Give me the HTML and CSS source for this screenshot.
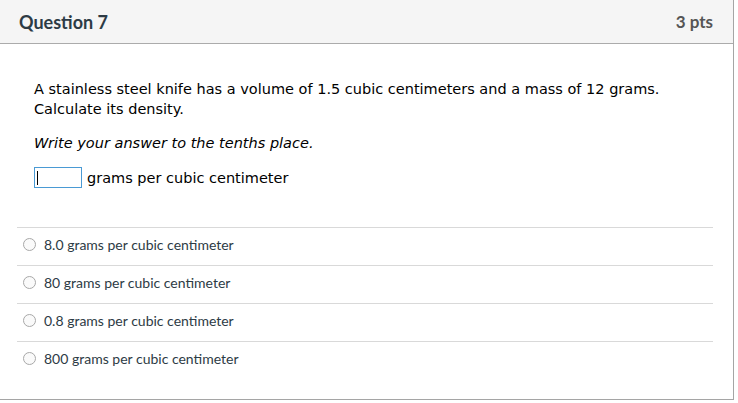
FILE: index.html
```html
<!DOCTYPE html>
<html>
<head>
<meta charset="utf-8">
<link rel="stylesheet" href="styles.css">
</head>
<body>
<div class="card">
  <div class="header">
    <span class="title">Question 7</span>
    <span class="pts">3 pts</span>
  </div>
  <div class="content">
    <p class="q">A stainless steel knife has a volume of 1.5 cubic centimeters and a mass of 12 grams. Calculate its density.</p>
    <p class="hint">Write your answer to the tenths place.</p>
    <div class="answer-row"><span class="input"><span class="caret"></span></span><span>grams per cubic centimeter</span></div>
  </div>
  <div class="options">
    <div class="opt"><span class="radio"></span><span>8.0 grams per cubic centimeter</span></div>
    <div class="opt"><span class="radio"></span><span>80 grams per cubic centimeter</span></div>
    <div class="opt"><span class="radio"></span><span>0.8 grams per cubic centimeter</span></div>
    <div class="opt"><span class="radio"></span><span>800 grams per cubic centimeter</span></div>
  </div>
</div>
</body>
</html>
```
FILE: styles.css
```css
html, body { margin: 0; padding: 0; background: #fff; }
.card {
  margin: -1px 0 0 -1px;
  width: 735px;
  height: 401px;
  border: 1px solid #a5a5a5;
  box-sizing: border-box;
  background: #fff;
}
.header {
  height: 44px;
  box-sizing: border-box;
  background: #f5f5f5;
  border-bottom: 1px solid #ababab;
  display: flex;
  justify-content: space-between;
  align-items: center;
  padding: 0 20px 0 19px;
  font-family: Lato, sans-serif;
  font-weight: bold;
  font-size: 18px;
}
.title { color: #2d3b45; }
.pts { color: #555; font-size: 17px; }
.content {
  padding: 35px 20px 0 34px;
  font-family: Verdana, "DejaVu Sans", sans-serif;
  font-size: 14.5px;
  color: #000;
  line-height: 20px;
}
.q { margin: 0 0 14px; width: 660px; }
.hint { margin: 0 0 14px; font-style: italic; }
.answer-row { display: flex; align-items: center; gap: 5px; }
.input {
  width: 48px; height: 21px; box-sizing: border-box;
  border: 1px solid #4a9ad4;
  position: relative;
}
.caret { position: absolute; left: 2px; top: 3px; width: 1px; height: 14px; background: #000; }
.options { margin: 39px 20px 0 17px; font-family: Lato, sans-serif; font-size: 14px; color: #2d3b45; }
.opt {
  height: 38px; box-sizing: border-box;
  border-top: 1px solid #d9d9d9;
  display: flex; align-items: center; gap: 8px; padding-left: 6px; padding-bottom: 4px;
}
.radio {
  width: 13px; height: 13px; box-sizing: border-box; border-radius: 50%;
  border: 1px solid #a8a8a8; background: #fafafa;
}
```
